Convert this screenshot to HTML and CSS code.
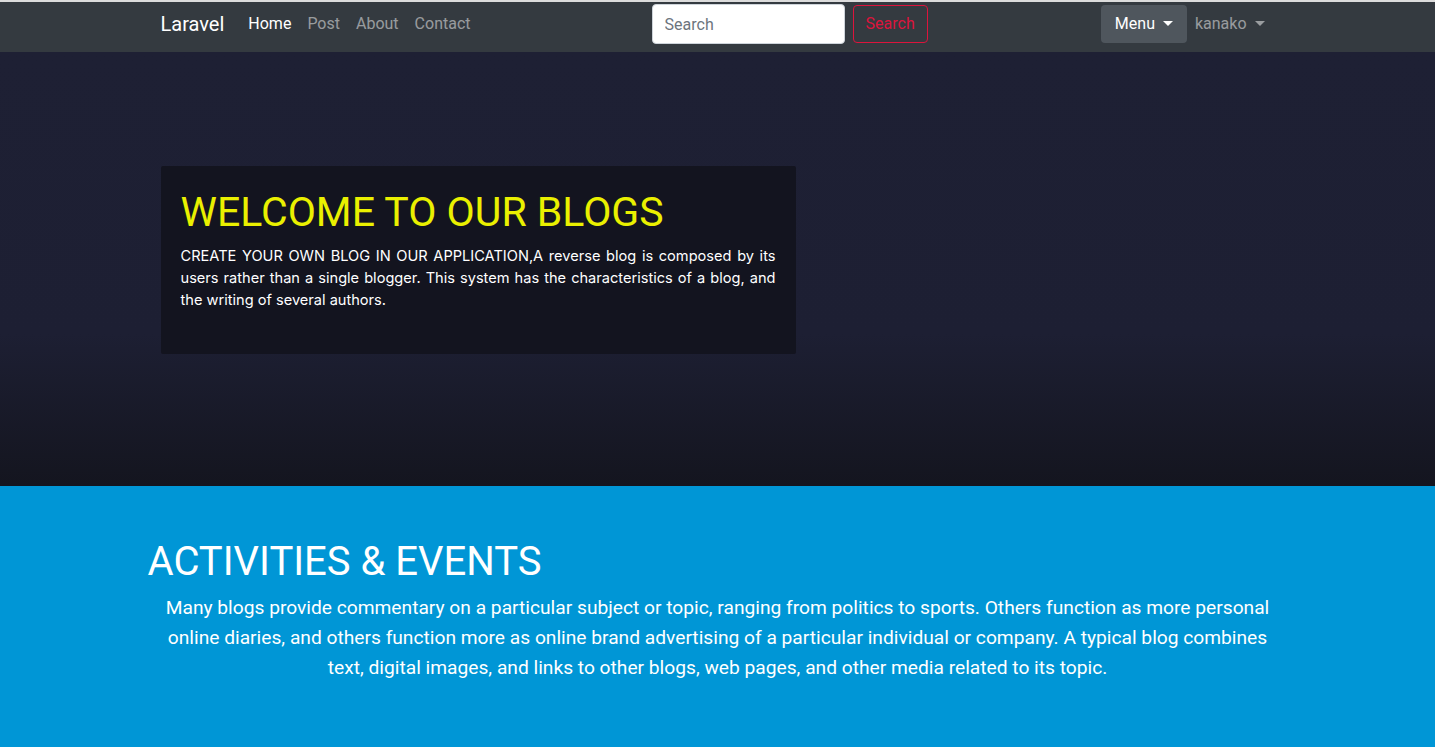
FILE: index.html
```html
<!DOCTYPE html>
<html lang="en">
<head>
<meta charset="utf-8">
<title>Laravel</title>
<link rel="stylesheet" href="styles.css">
</head>
<body>
<div class="topline"></div>
<nav class="navbar">
  <div class="container nav-inner">
    <a class="brand" href="#">Laravel</a>
    <ul class="nav-links">
      <li><a class="nav-link active" href="#">Home</a></li>
      <li><a class="nav-link" href="#">Post</a></li>
      <li><a class="nav-link" href="#">About</a></li>
      <li><a class="nav-link" href="#">Contact</a></li>
    </ul>
    <form class="search-form">
      <input class="search-input" type="text" placeholder="Search">
      <button class="search-btn" type="button">Search</button>
    </form>
    <div class="nav-right">
      <button class="menu-btn" type="button">Menu <span class="caret"></span></button>
      <a class="nav-link user" href="#">kanako <span class="caret"></span></a>
    </div>
  </div>
</nav>
<section class="hero">
  <div class="container">
    <div class="hero-box">
      <h1 class="hero-title">WELCOME TO OUR BLOGS</h1>
      <p class="hero-text">CREATE YOUR OWN BLOG IN OUR APPLICATION,A reverse blog is composed by its users rather than a single blogger. This system has the characteristics of a blog, and the writing of several authors.</p>
    </div>
  </div>
</section>
<section class="events">
  <div class="container-flush">
    <h1 class="events-title">ACTIVITIES &amp; EVENTS</h1>
    <p class="events-text">Many blogs provide commentary on a particular subject or topic, ranging from politics to sports. Others function as more personal online diaries, and others function more as online brand advertising of a particular individual or company. A typical blog combines text, digital images, and links to other blogs, web pages, and other media related to its topic.</p>
  </div>
</section>
</body>
</html>
```
FILE: styles.css
```css
* { box-sizing: border-box; }
html, body { margin: 0; padding: 0; }
body {
  font-family: Roboto, "Liberation Sans", Arial, sans-serif;
  font-size: 16px;
  line-height: 1.5;
  color: #212529;
  background: #0096d6;
}
.topline { height: 2px; background: #dcdcdc; }
.container {
  width: 1144px;
  margin: 0 auto;
  padding: 0 15px;
}
.container-flush {
  width: 1140px;
  margin: 0 auto;
}
.navbar {
  background: #343a40;
  padding: 2px 0 8px;
}
.nav-inner {
  display: flex;
  align-items: center;
}
.brand {
  color: #fff;
  font-size: 20px;
  text-decoration: none;
  margin-right: 16px;
  line-height: 30px;
}
.nav-links {
  display: flex;
  list-style: none;
  margin: 0;
  padding: 0;
}
.nav-link {
  display: block;
  padding: 8px;
  color: rgba(255,255,255,.5);
  text-decoration: none;
  font-size: 16px;
}
.nav-link.active { color: #fff; }
.search-form {
  margin: 0 auto;
  display: flex;
  align-items: center;
  gap: 8px;
}
.search-input {
  width: 193px;
  height: 40px;
  padding: 6px 12px;
  font: inherit;
  font-size: 16px;
  color: #495057;
  background: #fff;
  border: 1px solid #ced4da;
  border-radius: 4px;
}
.search-input::placeholder { color: #6c757d; }
.search-btn {
  height: 38px;
  padding: 6px 12px;
  font: inherit;
  font-size: 16px;
  color: #dc143c;
  background: transparent;
  border: 1px solid #dc143c;
  border-radius: 4px;
}
.nav-right {
  display: flex;
  align-items: center;
}
.menu-btn {
  height: 38px;
  padding: 6px 14px;
  font: inherit;
  font-size: 16px;
  color: #fff;
  background: #4f565d;
  border: 0;
  border-radius: 4px;
}
.user { padding-right: 10px; }
.caret {
  display: inline-block;
  width: 0;
  height: 0;
  margin-left: 4px;
  vertical-align: 3px;
  border-top: 5px solid currentColor;
  border-left: 5px solid transparent;
  border-right: 5px solid transparent;
}
.hero {
  background: linear-gradient(180deg, #1e2034 0%, #1d1f33 65%, #14151f 100%);
  padding: 114px 0 132px;
}
.hero-box {
  width: 635px;
  background: #13141f;
  border-radius: 2px;
  padding: 22px 20px 27px;
}
.hero-title {
  margin: 0 0 8px;
  font-size: 41px;
  font-weight: 400;
  line-height: 1.2;
  color: #eaf000;
}
.hero-text {
  margin: 0 0 16px;
  color: #fff;
  font-family: Inter, Roboto, sans-serif;
  font-size: 14.6px;
  line-height: 22px;
  text-align: justify;
}
.events {
  padding: 52px 0 60px;
}
.events-title {
  margin: 0 0 7px;
  font-size: 40px;
  font-weight: 400;
  line-height: 1.2;
  color: #fff;
}
.events-text {
  margin: 0;
  padding: 0 13px;
  color: #fff;
  font-size: 19.2px;
  line-height: 30px;
  text-align: center;
}
```
